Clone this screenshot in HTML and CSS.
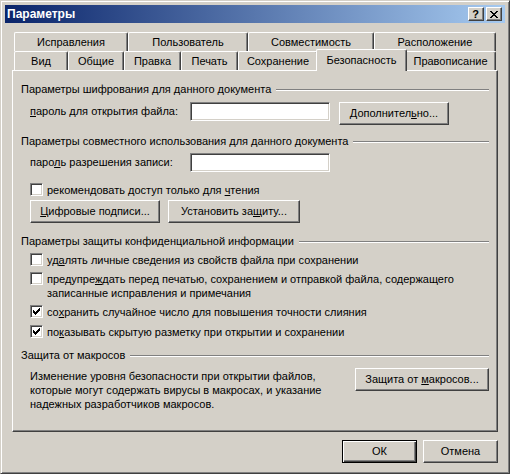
FILE: index.html
```html
<!DOCTYPE html>
<html lang="ru">
<head>
<meta charset="utf-8">
<title>Параметры</title>
<link rel="stylesheet" href="styles.css">
</head>
<body>
<div class="window">
  <div class="titlebar">
    <span class="title">Параметры</span>
    <div class="tbtns">
      <span class="tbtn help">?</span>
      <span class="tbtn close">
        <svg width="8" height="7" viewBox="0 0 8 7" shape-rendering="crispEdges"><path fill="#000" d="M0 0h2v1h-2zM6 0h2v1h-2zM1 1h2v1h-2zM5 1h2v1h-2zM2 2h4v1h-4zM3 3h2v1h-2zM2 4h4v1h-4zM1 5h2v1h-2zM5 5h2v1h-2zM0 6h2v1h-2zM6 6h2v1h-2z"/></svg>
      </span>
    </div>
  </div>
  <div class="client">
    <div class="tabs">
      <div class="tabrow">
        <div class="tab w114">Исправления</div>
        <div class="tab w120">Пользователь</div>
        <div class="tab w126">Совместимость</div>
        <div class="tab w122">Расположение</div>
      </div>
      <div class="tabrow">
        <div class="tab w54">Вид</div>
        <div class="tab w56">Общие</div>
        <div class="tab w57">Правка</div>
        <div class="tab w57">Печать</div>
        <div class="tab w80">Сохранение</div>
        <div class="tab w91 sel">Безопасность</div>
        <div class="tab w91">Правописание</div>
      </div>
    </div>
    <div class="panel">
      <div class="group g1"><span>Параметры шифрования для данного документа</span><i class="etch"></i></div>
      <div class="field f1">
        <span class="lbl"><u>п</u>ароль для открытия файла:</span>
        <span class="edit"></span>
        <span class="btn b-adv">Дополнител<u>ь</u>но...</span>
      </div>
      <div class="group g2"><span>Параметры совместного использования для данного документа</span><i class="etch"></i></div>
      <div class="field f2">
        <span class="lbl">паро<u>л</u>ь разрешения записи:</span>
        <span class="edit"></span>
      </div>
      <div class="cb cb-ro"><span class="box"></span><span>рекомендовать доступ только для <u>ч</u>тения</span></div>
      <div class="btnrow">
        <span class="btn b-sig"><u>Ц</u>ифровые подписи...</span>
        <span class="btn b-prot">Установить за<u>щ</u>иту...</span>
      </div>
      <div class="group g3"><span>Параметры защиты конфиденциальной информации</span><i class="etch"></i></div>
      <div class="cb cb-del"><span class="box"></span><span>уд<u>а</u>лять личные сведения из свойств файла при сохранении</span></div>
      <div class="cb cb-warn"><span class="box"></span><span>предупре<u>ж</u>дать перед печатью, сохранением и отправкой файла, содержащего<br>записанные исправления и примечания</span></div>
      <div class="cb cb-rand"><span class="box"><svg class="chk" width="7" height="7" viewBox="0 0 7 7" shape-rendering="crispEdges"><path fill="#000" d="M6 0h1v1h-1zM5 1h2v1h-2zM0 2h1v1h-1zM4 2h3v1h-3zM0 3h2v1h-2zM3 3h3v1h-3zM0 4h5v1h-5zM1 5h3v1h-3zM2 6h1v1h-1z"/></svg></span><span>со<u>х</u>ранить случайное число для повышения точности слияния</span></div>
      <div class="cb cb-show"><span class="box"><svg class="chk" width="7" height="7" viewBox="0 0 7 7" shape-rendering="crispEdges"><path fill="#000" d="M6 0h1v1h-1zM5 1h2v1h-2zM0 2h1v1h-1zM4 2h3v1h-3zM0 3h2v1h-2zM3 3h3v1h-3zM0 4h5v1h-5zM1 5h3v1h-3zM2 6h1v1h-1z"/></svg></span><span>по<u>к</u>азывать скрытую разметку при открытии и сохранении</span></div>
      <div class="group g4"><span>Защита от макросов</span><i class="etch"></i></div>
      <div class="macro">
        <p class="mtext">Изменение уровня безопасности при открытии файлов,<br>которые могут содержать вирусы в макросах, и указание<br>надежных разработчиков макросов.</p>
        <span class="btn b-macro">Защита от <u>м</u>акросов...</span>
      </div>
    </div>
    <div class="footer">
      <span class="btn f-btn default">ОК</span>
      <span class="btn f-btn">Отмена</span>
    </div>
  </div>
</div>
</body>
</html>
```
FILE: styles.css
```css
* { box-sizing: border-box; }
html, body { margin: 0; padding: 0; }
body {
  width: 510px;
  height: 474px;
  overflow: hidden;
  background: #D4D0C8;
  font-family: "Liberation Sans", Arial, sans-serif;
  font-size: 11px;
  color: #000;
}
u { text-underline-offset: 1px; }

.window {
  width: 510px;
  height: 474px;
  background: #D4D0C8;
  border: 1px solid;
  border-color: #D4D0C8 #404040 #404040 #D4D0C8;
  box-shadow: inset 1px 1px #fff, inset -1px -1px #808080;
  padding: 4px;
  display: flex;
  flex-direction: column;
}

.titlebar {
  height: 18px;
  flex: none;
  display: flex;
  align-items: center;
  background: linear-gradient(to right, #0A246A, #A6CAF0);
  padding: 0 3px 0 2px;
}
.title {
  flex: 1;
  color: #fff;
  font-weight: bold;
  font-size: 12px;
  line-height: 18px;
}
.tbtns { display: flex; gap: 2px; }
.tbtn {
  width: 16px;
  height: 14px;
  background: #D4D0C8;
  border: 1px solid;
  border-color: #fff #404040 #404040 #fff;
  box-shadow: inset -1px -1px #808080;
  display: flex;
  align-items: center;
  justify-content: center;
}
.help { font-weight: bold; font-size: 11px; line-height: 12px; padding-right: 1px; }
.close svg { display: block; margin-right: 1px; }

.client {
  padding: 9px 7px 0 7px;
  display: flex;
  flex-direction: column;
}

.tabs {
  margin-left: 2px;
  width: 482px;
  position: relative;
  z-index: 1;
}
.tabrow { display: flex; height: 19px; }
.tab {
  flex: none;
  height: 19px;
  background: #D4D0C8;
  border-top: 1px solid #fff;
  border-left: 1px solid #fff;
  border-right: 1px solid #404040;
  box-shadow: inset -1px 0 #808080;
  border-radius: 2px 2px 0 0;
  text-align: center;
  padding-top: 3px;
  line-height: 13px;
  white-space: nowrap;
}
.tab.sel {
  height: 22px;
  margin: -2px -2px 0 -2px;
  padding-top: 4px;
  position: relative;
  z-index: 2;
}
.w54 { width: 54px; }
.w56 { width: 56px; }
.w57 { width: 57px; }
.w80 { width: 80px; }
.w91 { width: 91px; }
.w114 { width: 114px; }
.w120 { width: 120px; }
.w122 { width: 122px; }
.w126 { width: 126px; }

.panel {
  height: 362px;
  border: 1px solid;
  border-color: #fff #404040 #404040 #fff;
  box-shadow: inset -1px -1px #808080;
  padding: 12px 8px 0 8px;
}

.group {
  display: flex;
  align-items: center;
  height: 13px;
  line-height: 13px;
  white-space: nowrap;
}
.etch {
  flex: 1;
  height: 2px;
  margin-left: 5px;
  border-top: 1px solid #808080;
  border-bottom: 1px solid #fff;
}
.g2 { margin-top: 10px; }
.g3 { margin-top: 12px; }
.g4 { margin-top: 10px; }

.field { display: flex; margin-left: 9px; }
.lbl { width: 160px; line-height: 19px; white-space: nowrap; }
.f1 { margin-top: 6px; }
.f2 { margin-top: 5px; }
.edit {
  width: 140px;
  height: 19px;
  flex: none;
  background: #fff;
  border: 1px solid;
  border-color: #808080 #fff #fff #808080;
  box-shadow: inset 1px 1px #404040, inset -1px -1px #D4D0C8;
}

.btn {
  flex: none;
  display: block;
  height: 23px;
  line-height: 21px;
  text-align: center;
  white-space: nowrap;
  background: #D4D0C8;
  border: 1px solid;
  border-color: #fff #404040 #404040 #fff;
  box-shadow: inset -1px -1px #808080;
}
.b-adv { width: 110px; margin-left: 9px; }

.cb {
  display: flex;
  align-items: flex-start;
  margin-left: 9px;
  line-height: 14px;
  white-space: nowrap;
}
.box {
  flex: none;
  width: 13px;
  height: 13px;
  margin-right: 4px;
  background: #fff;
  border: 1px solid;
  border-color: #808080 #fff #fff #808080;
  box-shadow: inset 1px 1px #404040, inset -1px -1px #D4D0C8;
}
.chk { display: block; margin: 2px 0 0 2px; }
.cb-ro { margin-top: 11px; }
.cb-del { margin-top: 5px; }
.cb-warn { margin-top: 5px; }
.cb-rand { margin-top: 5px; }
.cb-show { margin-top: 6px; }

.btnrow { display: flex; gap: 8px; margin-top: 3px; margin-left: 9px; }
.b-sig { width: 130px; }
.b-prot { width: 132px; }

.macro {
  display: flex;
  align-items: flex-start;
  margin-top: 6px;
  margin-left: 9px;
}
.mtext { margin: 1px 0 0 0; line-height: 14px; white-space: nowrap; }
.b-macro { width: 134px; margin-left: auto; }

.footer {
  display: flex;
  justify-content: flex-end;
  gap: 6px;
  margin-top: 8px;
}
.f-btn { width: 75px; }
.default {
  border: 1px solid #000;
  box-shadow: inset 1px 1px #fff, inset -1px -1px #404040, inset -2px -2px #808080;
}
```
